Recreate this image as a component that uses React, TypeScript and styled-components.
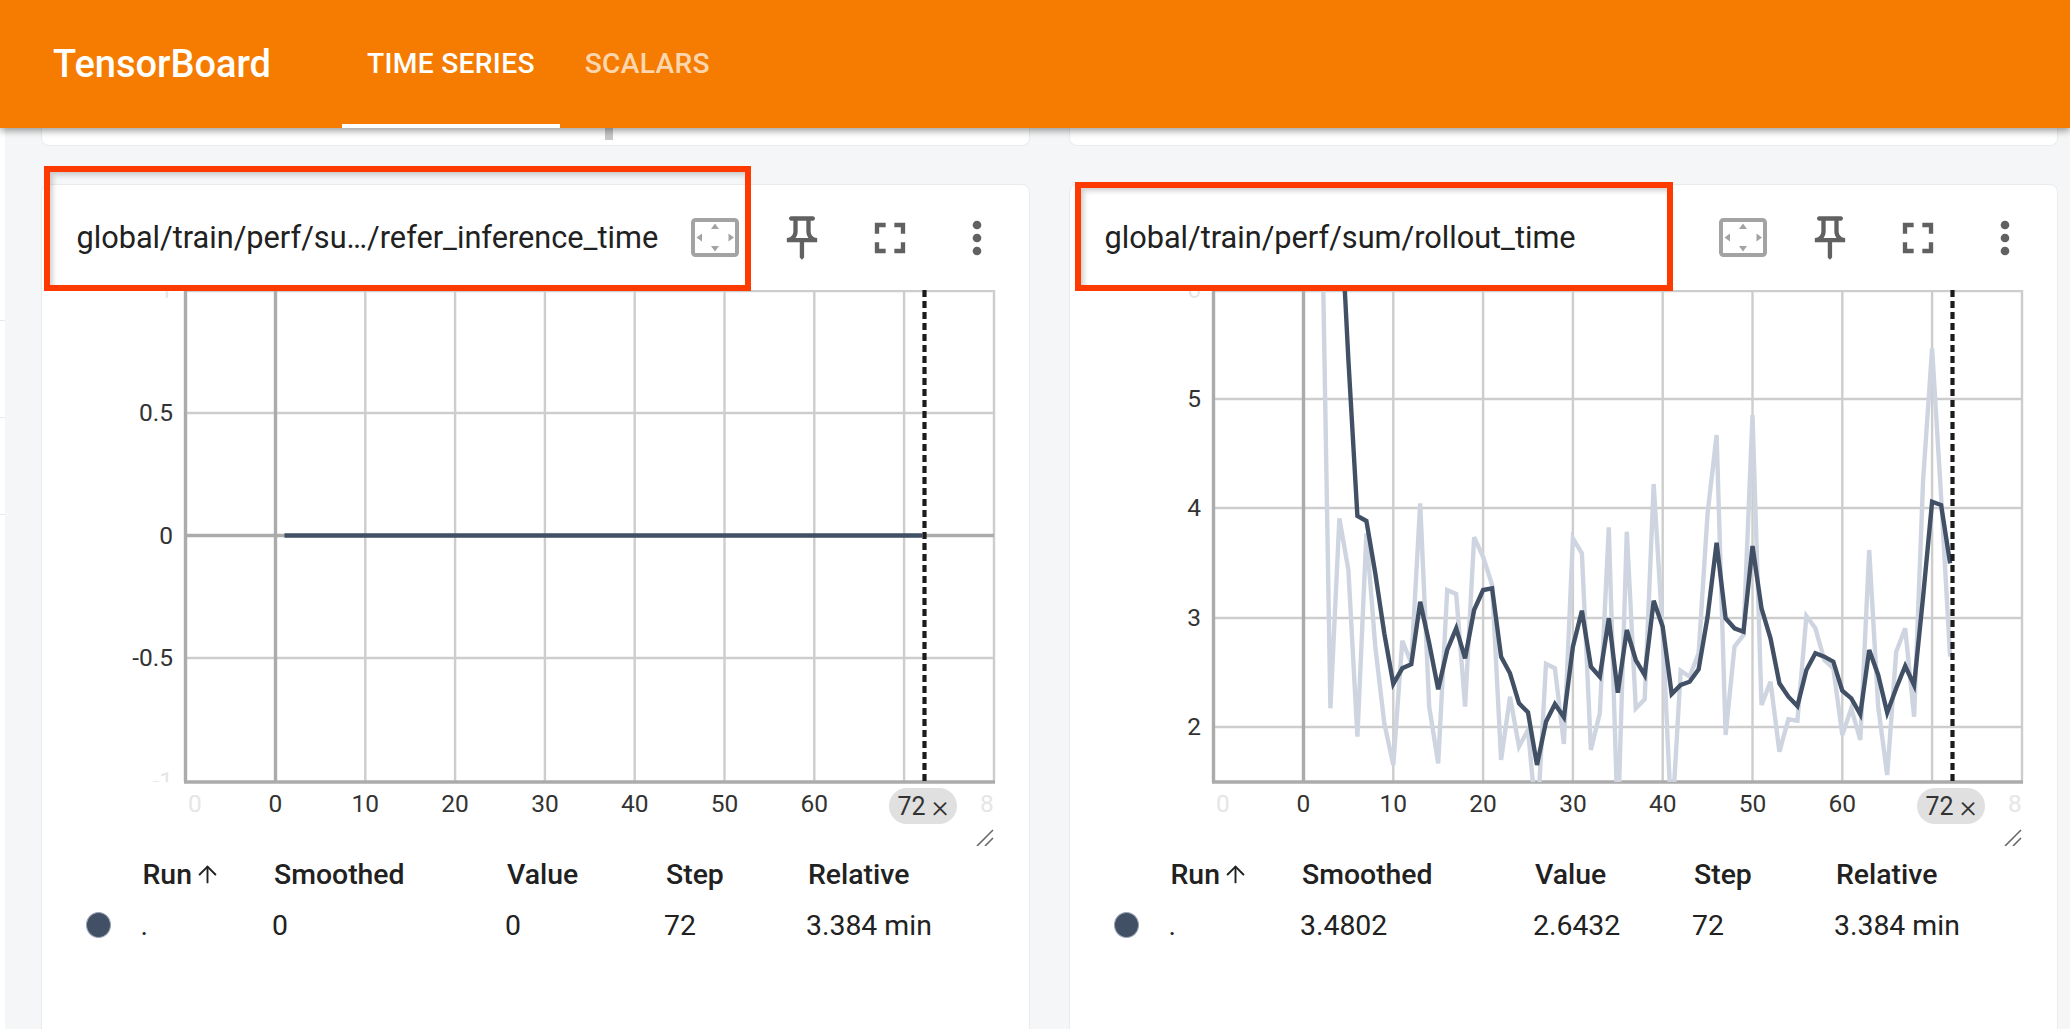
import * as React from "react";
import styled, { createGlobalStyle } from "styled-components";
import { ArrowUp } from "lucide-react";

const GlobalStyle = createGlobalStyle`
  html, body {
    margin: 0;
    height: 100%;
    overflow: hidden;
    background: #f5f6f7;
    font-family: Roboto, "Liberation Sans", sans-serif;
  }
`;

const Root = styled.div`
  height: 100vh;
  overflow: hidden;
  display: flex;
  flex-direction: column;
`;

const TopBar = styled.header`
  flex: none;
  height: 128px;
  box-sizing: border-box;
  padding-left: 53px;
  display: flex;
  align-items: stretch;
  background: #f57c00;
  color: #fff;
  box-shadow: 0 3px 7px rgba(0, 0, 0, 0.38);
  position: relative;
  z-index: 2;
`;

const Brand = styled.div`
  align-self: center;
  width: 217px;
  margin-right: 72px;
  font-size: 38px;
  font-weight: 500;
  white-space: nowrap;
`;

const Tab = styled.div<{ $active?: boolean }>`
  box-sizing: border-box;
  padding: 2px 25px 0;
  display: flex;
  align-items: center;
  font-size: 28.2px;
  font-weight: 500;
  letter-spacing: 0.3px;
  white-space: nowrap;
  color: ${(p) => (p.$active ? "#fff" : "rgba(255, 255, 255, 0.7)")};
  border-bottom: 4px solid ${(p) => (p.$active ? "#fff" : "transparent")};
`;

const Main = styled.div`
  flex: 1;
  display: flex;
  min-height: 0;
`;

const Sidebar = styled.aside`
  flex: none;
  width: 5px;
  padding-top: 96px;
  background: #fff;
`;

const SidebarRow = styled.div`
  height: 96px;
  border-bottom: 1px solid #e8e8e8;
`;

const Content = styled.main`
  flex: 1;
  min-width: 0;
  padding: 0 12px 0 36px;
`;

const CardGrid = styled.div`
  display: grid;
  grid-template-columns: 989px 989px;
  column-gap: 39px;
`;

const PrevCard = styled.div`
  height: 18px;
  box-sizing: border-box;
  background: #fff;
  border: 1px solid #ebebeb;
  border-top: none;
  border-radius: 0 0 8px 8px;
  margin-bottom: 38px;
`;

const PrevCardGrip = styled.div`
  width: 8px;
  height: 12px;
  margin-left: 563px;
  background: #c8c8c8;
`;

const Card = styled.section`
  position: relative;
  height: 900px;
  box-sizing: border-box;
  background: #fff;
  border: 1px solid #ebebeb;
  border-radius: 8px 8px 0 0;
`;

const CardHeader = styled.div`
  height: 105px;
  padding: 0 8px 0 34.5px;
  display: flex;
  align-items: center;
`;

const CardTitle = styled.div`
  flex: 1;
  min-width: 0;
  font-size: 30.7px;
  color: #212121;
  white-space: nowrap;
`;

const IconSlot = styled.div<{ $color?: string }>`
  width: 87.5px;
  flex: none;
  display: flex;
  justify-content: center;
  align-items: center;
  color: ${(p) => p.$color ?? "#616161"};

  svg {
    display: block;
  }
`;

const Callout = styled.div<{ $left: number; $top: number; $width: number; $height: number }>`
  position: absolute;
  left: ${(p) => p.$left}px;
  top: ${(p) => p.$top}px;
  width: ${(p) => p.$width}px;
  height: ${(p) => p.$height}px;
  box-sizing: border-box;
  border: 6.5px solid #ff3a00;
  box-shadow: inset 3px 3px 5px rgba(0, 0, 0, 0.18);
  pointer-events: none;
`;

const ChartArea = styled.div`
  position: relative;
  height: 556px;

  svg {
    display: block;
  }
`;

const GridLine = styled.line`
  stroke: #cdcdcd;
  stroke-width: 2.4;
`;

const AxisLine = styled.line`
  stroke: #ababab;
  stroke-width: 3.4;
`;

const Tick = styled.text<{ $faded?: boolean }>`
  font-family: Roboto, "Liberation Sans", sans-serif;
  font-size: 24.5px;
  fill: ${(p) => (p.$faded ? "#e6e6e6" : "#333")};
`;

const SeriesLine = styled.polyline<{ $light?: boolean }>`
  fill: none;
  stroke: ${(p) => (p.$light ? "#ced5e1" : "#425066")};
  stroke-width: 4.4;
`;

const StepLine = styled.line`
  stroke: #1c1c1c;
  stroke-width: 4.2;
  stroke-dasharray: 7 4;
`;

const HandleLine = styled.line`
  stroke: #666;
  stroke-width: 1.6;
`;

const StepChip = styled.div`
  position: absolute;
  left: 847px;
  top: 498px;
  width: 68px;
  height: 36px;
  border-radius: 18px;
  background: #e0e0e0;
  color: #333;
  font-size: 25px;
  display: flex;
  align-items: center;
  justify-content: center;
  gap: 6px;
`;

const ChipClose = styled.span`
  font-size: 32px;
  font-weight: 300;
  line-height: 1;
`;

const DataTable = styled.div`
  margin-left: 44px;
  margin-top: 2.5px;
  display: grid;
  grid-template-columns: 56.5px 131.5px 233px 159px 142px auto;
  grid-auto-rows: 51px;
  align-items: center;
  font-size: 28.4px;
  color: #212121;
`;

const HeadCell = styled.div`
  font-weight: 500;
  display: flex;
  align-items: center;
  white-space: nowrap;

  svg {
    margin-left: 2px;
  }
`;

const ValueCell = styled.div`
  margin-left: -2px;
  white-space: nowrap;
`;

const RunDot = styled.div`
  width: 25px;
  height: 26px;
  box-sizing: border-box;
  border-radius: 50%;
  background: #425066;
  border: 1.5px solid #9aa4b4;
`;

function FitIcon() {
  return (
    <svg width="48" height="39" viewBox="0 0 48 39">
      <rect x="2" y="2" width="44" height="35" rx="2.5" fill="none" stroke="currentColor" strokeWidth="4" />
      <path d="M24 5.5l4 5.5h-8zM24 33.5l-4-5.5h8zM5.5 19.5l5.5-4v8zM43 19.5l-5.5 4v-8z" fill="currentColor" />
    </svg>
  );
}

function PinIcon() {
  return (
    <svg width="52" height="52" viewBox="0 0 24 24" fill="currentColor">
      <path d="M14 4v5c0 1.12.37 2.16 1 3H9c.65-.86 1-1.9 1-3V4h4m3-2H7c-.55 0-1 .45-1 1s.45 1 1 1l1 0v5c0 1.66-1.34 3-3 3v2h5.97v7l1 1 1-1v-7H19v-2c-1.66 0-3-1.34-3-3V4l1 0c.55 0 1-.45 1-1s-.45-1-1-1z" />
    </svg>
  );
}

function FullscreenIcon() {
  return (
    <svg width="52" height="52" viewBox="0 0 24 24" fill="currentColor">
      <path d="M7 14H5v5h5v-2H7v-3zm-2-4h2V7h3V5H5v5zm12 7h-3v2h5v-5h-2v3zM14 5v2h3v3h2V5h-5z" />
    </svg>
  );
}

function MoreIcon() {
  return (
    <svg width="52" height="52" viewBox="0 0 24 24" fill="currentColor">
      <circle cx="12" cy="6" r="2" />
      <circle cx="12" cy="12" r="2" />
      <circle cx="12" cy="18" r="2" />
    </svg>
  );
}

const PLOT_LEFT = 143.5;
const PLOT_RIGHT = 952;
const PLOT_BOTTOM = 492;
const STEP_LINE_X = 882.5;
const stepX = (step: number) => 233.5 + step * 8.98;

type Point = [number, number];
type YTick = { label: string; y: number };

// y values were read off the 3x crop, hence the scale
const fromCrop = (startStep: number, ys: number[]): Point[] =>
  ys.map((y, i) => [startStep + i, y / 3 - 10]);

const rolloutRaw: Point[] = [
  [2.2, 0],
  ...fromCrop(3, [
    1285, 715, 870, 1370, 760, 1100, 1330, 1455, 1082, 1150, 670, 1280, 1450, 930, 942, 1280, 772, 830, 915, 1440,
    1250, 1400, 1350, 1640, 1152, 1165, 1392, 775, 820, 1410, 1300, 742, 1640, 755, 1285, 1258, 612, 1060, 1640,
    1172, 1190, 1120, 700, 465, 1365, 1100, 1065, 405, 1275, 1205, 1415, 1318, 1322, 1008, 1045, 1140, 1165, 1365,
    1285, 1380, 810, 1280, 1485, 1115, 1045, 1310, 600, 205, 650, 1130,
  ]),
];

const rolloutSmoothed: Point[] = [
  [4.6, 0],
  ...fromCrop(5, [
    240, 708, 723, 880, 1060, 1212, 1165, 1153, 965, 1090, 1228, 1110, 1045, 1135, 990, 930, 925, 1130, 1180, 1270,
    1297, 1455, 1325, 1272, 1312, 1100, 992, 1160, 1190, 1015, 1238, 1050, 1140, 1185, 962, 1040, 1242, 1215, 1205,
    1168, 1010, 788, 1015, 1045, 1055, 798, 985, 1075, 1210, 1250, 1278, 1170, 1120, 1130, 1145, 1232, 1255, 1303,
    1110, 1185, 1298, 1225, 1158, 1215, 950, 665, 675, 850,
  ]),
];

const toPoints = (points: Point[]) => points.map(([s, y]) => `${stepX(s).toFixed(1)},${y.toFixed(1)}`).join(" ");

interface ChartProps {
  id: string;
  yTicks: YTick[];
  zeroY?: number;
  ghostTicks: YTick[];
  series: { points: Point[]; light?: boolean }[];
}

function Chart({ id, yTicks, zeroY, ghostTicks, series }: ChartProps) {
  const clipId = `plot-${id}`;
  return (
    <ChartArea>
      <svg width="988" height="556" viewBox="0 0 988 556">
        <defs>
          <clipPath id={clipId}>
            <rect x={PLOT_LEFT} y="0" width={PLOT_RIGHT - PLOT_LEFT} height={PLOT_BOTTOM} />
          </clipPath>
          <clipPath id={`${clipId}-ticks`}>
            <rect x="0" y="0" width={PLOT_LEFT} height={PLOT_BOTTOM} />
          </clipPath>
        </defs>

        <GridLine x1={PLOT_LEFT} x2={PLOT_RIGHT} y1="1" y2="1" />
        <GridLine x1={PLOT_RIGHT} x2={PLOT_RIGHT} y1="0" y2={PLOT_BOTTOM} />
        {[10, 20, 30, 40, 50, 60, 70].map((s) => (
          <GridLine key={s} x1={stepX(s)} x2={stepX(s)} y1="0" y2={PLOT_BOTTOM} />
        ))}
        {yTicks.map((t) => (
          <GridLine key={t.label} x1={PLOT_LEFT} x2={PLOT_RIGHT} y1={t.y} y2={t.y} />
        ))}

        <AxisLine x1={stepX(0)} x2={stepX(0)} y1="0" y2={PLOT_BOTTOM} />
        {zeroY !== undefined && <AxisLine x1={PLOT_LEFT} x2={PLOT_RIGHT} y1={zeroY} y2={zeroY} />}
        <AxisLine x1={PLOT_LEFT} x2={PLOT_LEFT} y1="0" y2={PLOT_BOTTOM} />
        <AxisLine x1={PLOT_LEFT - 1.5} x2={PLOT_RIGHT + 1} y1={PLOT_BOTTOM} y2={PLOT_BOTTOM} />

        <g clipPath={`url(#${clipId})`}>
          {series.map((s, i) => (
            <SeriesLine key={i} points={toPoints(s.points)} $light={s.light} />
          ))}
        </g>

        <StepLine x1={STEP_LINE_X} x2={STEP_LINE_X} y1="0" y2={PLOT_BOTTOM} />

        {yTicks.map((t) => (
          <Tick key={t.label} x="131" y={t.y + 8} textAnchor="end">
            {t.label}
          </Tick>
        ))}
        <g clipPath={`url(#${clipId}-ticks)`}>
          {ghostTicks.map((t) => (
            <Tick key={t.label} x="131" y={t.y + 8} textAnchor="end" $faded>
              {t.label}
            </Tick>
          ))}
        </g>

        <Tick x="153" y="522" textAnchor="middle" $faded>
          0
        </Tick>
        {[0, 10, 20, 30, 40, 50, 60].map((s) => (
          <Tick key={s} x={stepX(s)} y="522" textAnchor="middle">
            {s}
          </Tick>
        ))}
        <Tick x="945" y="522" textAnchor="middle" $faded>
          8
        </Tick>

        <HandleLine x1="935" y1="556" x2="951" y2="540" />
        <HandleLine x1="943" y1="556" x2="951" y2="548" />
      </svg>
      <StepChip>
        72
        <ChipClose>×</ChipClose>
      </StepChip>
    </ChartArea>
  );
}

interface ScalarCardProps {
  title: string;
  smoothed: string;
  value: string;
  callout: { left: number; top: number; width: number; height: number };
  chart: Omit<ChartProps, "id">;
  id: string;
}

function ScalarCard({ id, title, smoothed, value, callout, chart }: ScalarCardProps) {
  return (
    <Card>
      <CardHeader>
        <CardTitle>{title}</CardTitle>
        <IconSlot $color="#a3a3a3">
          <FitIcon />
        </IconSlot>
        <IconSlot>
          <PinIcon />
        </IconSlot>
        <IconSlot>
          <FullscreenIcon />
        </IconSlot>
        <IconSlot>
          <MoreIcon />
        </IconSlot>
      </CardHeader>
      <Chart id={id} {...chart} />
      <DataTable>
        <span />
        <HeadCell>
          Run
          <ArrowUp size={27} strokeWidth={1.7} />
        </HeadCell>
        <HeadCell>Smoothed</HeadCell>
        <HeadCell>Value</HeadCell>
        <HeadCell>Step</HeadCell>
        <HeadCell>Relative</HeadCell>

        <RunDot />
        <ValueCell>.</ValueCell>
        <ValueCell>{smoothed}</ValueCell>
        <ValueCell>{value}</ValueCell>
        <ValueCell>72</ValueCell>
        <ValueCell>3.384 min</ValueCell>
      </DataTable>
      <Callout
        $left={callout.left}
        $top={callout.top}
        $width={callout.width}
        $height={callout.height}
      />
    </Card>
  );
}

export default function App() {
  return (
    <Root>
      <GlobalStyle />
      <TopBar>
        <Brand>TensorBoard</Brand>
        <Tab $active>TIME SERIES</Tab>
        <Tab>SCALARS</Tab>
      </TopBar>
      <Main>
        <Sidebar>
          <SidebarRow />
          <SidebarRow />
          <SidebarRow />
        </Sidebar>
        <Content>
          <CardGrid>
            <PrevCard>
              <PrevCardGrip />
            </PrevCard>
            <PrevCard />
            <ScalarCard
              id="refer"
              title="global/train/perf/su…/refer_inference_time"
              smoothed="0"
              value="0"
              callout={{ left: 2, top: -19, width: 707, height: 125 }}
              chart={{
                yTicks: [
                  { label: "0.5", y: 123 },
                  { label: "0", y: 245.5 },
                  { label: "-0.5", y: 368 },
                ],
                zeroY: 245.5,
                ghostTicks: [
                  { label: "1", y: 0 },
                  { label: "-1", y: 491 },
                ],
                series: [
                  {
                    points: [
                      [1, 245.5],
                      [72, 245.5],
                    ],
                  },
                ],
              }}
            />
            <ScalarCard
              id="rollout"
              title="global/train/perf/sum/rollout_time"
              smoothed="3.4802"
              value="2.6432"
              callout={{ left: 5, top: -3, width: 598, height: 109 }}
              chart={{
                yTicks: [
                  { label: "5", y: 109 },
                  { label: "4", y: 218 },
                  { label: "3", y: 328 },
                  { label: "2", y: 437 },
                ],
                ghostTicks: [{ label: "6", y: 0 }],
                series: [{ points: rolloutRaw, light: true }, { points: rolloutSmoothed }],
              }}
            />
          </CardGrid>
        </Content>
      </Main>
    </Root>
  );
}
